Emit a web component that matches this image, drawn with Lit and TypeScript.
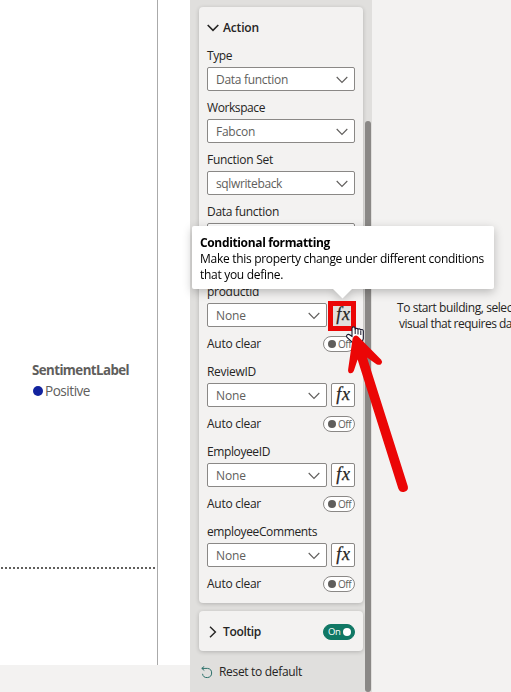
import { LitElement, html, css } from "lit";
import { customElement, property } from "lit/decorators.js";

// A single line of text whose tracking is set so that it takes a given width.
@customElement("fit-text")
class FitText extends LitElement {
  @property({ type: Number }) width = 0;
  @property() text = "";
  static styles = css`
    :host { display: inline-block; white-space: nowrap; }
    span { display: inline-block; }
  `;
  render() {
    return html`<span>${this.text}</span>`;
  }
  updated() {
    if (!this.text) return;
    const span = this.renderRoot.querySelector("span") as HTMLElement;
    span.style.letterSpacing = "0px";
    const natural = span.getBoundingClientRect().width;
    span.style.letterSpacing = `${(this.width - natural) / this.text.length}px`;
  }
}

const t = (text: string, width: number) =>
  html`<fit-text .text=${text} .width=${width}></fit-text>`;

const chevron = html`<svg class="chev" width="12" height="8" viewBox="0 0 12 8">
  <path d="M.7 1 6 6.4 11.3 1" fill="none" stroke="#605e5c" stroke-width="1.1" />
</svg>`;

@customElement("app-root")
class AppRoot extends LitElement {
  static styles = css`
    * { box-sizing: border-box; }
    :host {
      display: flex; position: relative; width: 511px; height: 692px; overflow: hidden;
      background: #f3f2f1; color: #252423;
      font: 12px/16px "Open Sans", "Noto Sans", sans-serif;
    }
    svg { display: block; flex: none; }
    .canvas { width: 190px; height: 665px; background: #fff; flex: none; display: flex; }
    .visual { width: 158px; border-right: 1px solid #aaa; display: flex; flex-direction: column; color: #605e5c; }
    .legend { padding: 360px 0 0 32px; height: 567px; }
    .legend-title { font-weight: 700; font-size: 13.3px; line-height: 20px; }
    .legend-item { display: flex; align-items: center; font-size: 13.6px; line-height: 21px; }
    .dot { width: 10px; height: 10px; border-radius: 50%; background: #12239e; margin: 0 2px 0 1px; }
    .dots { height: 2px; margin: 0 2px 0 1px;
      background: repeating-linear-gradient(90deg, #605e5c 0 2px, transparent 2px 4px); }
    .pane { width: 182px; background: #e0dfdd; flex: none; display: flex; }
    .cards { width: 164px; margin: 7px 2px 0 9px; flex: none; }
    .card { background: #f3f2f1; border-radius: 4px; box-shadow: 0 1px 4px rgba(0, 0, 0, .2); padding: 0 8px; }
    .action { height: 596px; }
    .head { display: flex; align-items: center; font-weight: 600; }
    .action .head { height: 41px; gap: 4px; }
    .field { height: 52px; }
    .action .field.last { height: 80px; }
    .param { height: 80px; }
    .label { height: 16px; margin-bottom: 3px; }
    .row { display: flex; gap: 4px; }
    .select { flex: 1; height: 24px; background: #fff; border: 1px solid #8a8886; border-radius: 2px;
      display: flex; align-items: center; justify-content: space-between; padding: 1px 6px 0 8px; color: #605e5c; }
    .fx { width: 24px; height: 24px; border: 1px solid #8a8886; border-radius: 2px; background: #fff;
      font: italic 18px/20px "Liberation Serif", serif; letter-spacing: .7px; text-align: center;
      color: #252423; padding-left: 1px; -webkit-text-stroke: .25px #252423; }
    .fx.hot { background: #e1dfdd; }
    .clear { display: flex; justify-content: space-between; align-items: center; height: 16px; margin-top: 9px; }
    .toggle { width: 32px; height: 16px; border: 1px solid #8a8886; border-radius: 8px; background: #fff;
      display: flex; align-items: center; gap: 2px; padding-left: 4px; font-size: 10px; line-height: 14px; color: #605e5c; }
    .knob { width: 8px; height: 8px; border-radius: 50%; background: #605e5c; flex: none; }
    .toggle.on { background: #117865; border-color: #117865; color: #fff; gap: 2px; font-size: 9.5px; }
    .on .knob { background: #fff; }
    .tip-card { height: 40px; margin-top: 8px; display: flex; align-items: center; justify-content: space-between; padding-top: 1px; }
    .tip-card .head { padding: 0 0 0 2px; gap: 6px; }
    .reset { display: flex; align-items: center; gap: 6px; padding: 13px 0 0 2px; }
    .thumb { width: 6px; margin-top: 121px; height: 571px; border-radius: 3px; background: #8a8886; flex: none; }
    .empty { padding: 300px 0 0 25px; white-space: nowrap; width: 139px; flex: none; overflow: hidden; }
    .empty .second { padding-left: 2px; }
    .callout { position: absolute; left: 192px; top: 226px; width: 302px; height: 63px; padding: 9px 8px;
      background: #fff; border-radius: 2px; color: #000; filter: drop-shadow(0 3px 5px rgba(0, 0, 0, .24)); }
    .callout div { height: 16px; }
    .callout b { font-weight: 700; }
    .tail { position: absolute; left: 140px; top: 62px; }
    .frame { position: absolute; left: 328px; top: 301px; width: 28px; height: 30px; border: 5px solid #eb0606; }
    .marks { position: absolute; left: 0; top: 0; }
  `;

  field(label: string, lw: number, value: string, vw: number, last = false) {
    return html`<div class="field ${last ? "last" : ""}">
      <div class="label">${t(label, lw)}</div>
      <div class="row"><div class="select">${t(value, vw)}${chevron}</div></div>
    </div>`;
  }

  param(label: string, lw: number, hot = false) {
    return html`<div class="param">
      <div class="label">${t(label, lw)}</div>
      <div class="row">
        <div class="select">${t("None", 30)}${chevron}</div>
        <div class="fx ${hot ? "hot" : ""}">fx</div>
      </div>
      <div class="clear">${t("Auto clear", 54)}
        <div class="toggle"><span class="knob"></span>${t("Off", 13)}</div>
      </div>
    </div>`;
  }

  render() {
    return html`
      <div class="canvas">
        <div class="visual">
          <div class="legend">
            <div class="legend-title">${t("SentimentLabel", 97)}</div>
            <div class="legend-item"><span class="dot"></span>${t("Positive", 45)}</div>
          </div>
          <div class="dots"></div>
        </div>
      </div>
      <div class="pane">
        <div class="cards">
          <div class="card action">
            <div class="head">
              <svg width="12" height="8" viewBox="0 0 12 8"><path d="M.7 1 6 6.4 11.3 1" fill="none" stroke="#252423" stroke-width="1.6" /></svg>
              ${t("Action", 36)}
            </div>
            ${this.field("Type", 25, "Data function", 72)}
            ${this.field("Workspace", 58, "Fabcon", 39)}
            ${this.field("Function Set", 66, "sqlwriteback", 66)}
            ${this.field("Data function", 72, "", 0, true)}
            ${this.param("productid", 52, true)}
            ${this.param("ReviewID", 49)}
            ${this.param("EmployeeID", 63)}
            ${this.param("employeeComments", 110)}
          </div>
          <div class="card tip-card">
            <div class="head">
              <svg width="8" height="12" viewBox="0 0 8 12"><path d="M1 .7 6.4 6 1 11.3" fill="none" stroke="#252423" stroke-width="1.4" /></svg>
              ${t("Tooltip", 38)}
            </div>
            <div class="toggle on">${t("On", 12.5)}<span class="knob"></span></div>
          </div>
          <div class="reset">
            <svg width="12" height="13" viewBox="0 0 12 13"><path d="M3.3.3.8 2.4 3.3 4.5M.8 2.4H6.5a4.6 4.6 0 1 1-5 5.4" fill="none" stroke="#2b6f69" stroke-width="1" /></svg>
            ${t("Reset to default", 83)}
          </div>
        </div>
        <div class="thumb"></div>
      </div>
      <div class="empty">
        <div>${t("To start building, selec", 115)}</div>
        <div class="second">${t("visual that requires da", 113)}</div>
      </div>
      <div class="callout">
        <div><b>${t("Conditional formatting", 130)}</b></div>
        <div>${t("Make this property change under different conditions", 284)}</div>
        <div>${t("that you define.", 83)}</div>
        <svg class="tail" width="21" height="11" viewBox="0 0 21 11"><path d="M0 0h21L10.5 10.5z" fill="#fff" /></svg>
      </div>
      <div class="frame"></div>
      <svg class="marks" width="511" height="692" viewBox="0 0 511 692">
        <path d="M352 342l-5-4.5c-1.5-2 .8-4 3-2.5l2 1.5v-8c0-2.2 3.2-2.2 3.2 0v1c0-1.6 2.8-1.5 2.8.3 0-1.5 2.8-1.2 2.8.5 0-1.3 2.5-.9 2.5.8v7.5l-2 5z" fill="#fff" stroke="#15152a" stroke-width="1.1" />
        <path d="M355.2 328v6M358 329.5v5M360.8 330.5v4.5" stroke="#15152a" stroke-width="1" />
        <path d="M352.6 338.5Q354.5 333.8 358.2 336.4L381.2 359.8Q383 362 381.2 364Q379.5 365.6 376.5 364.2L367 357.6L407.8 486.2Q408.8 490.5 404.5 491.8Q400 492.9 398.3 488.5L357.6 359.5L353.8 371Q352.3 374 349.8 373.2Q347.6 372.4 348.2 369Z" fill="#eb0606" />
      </svg>
    `;
  }
}
